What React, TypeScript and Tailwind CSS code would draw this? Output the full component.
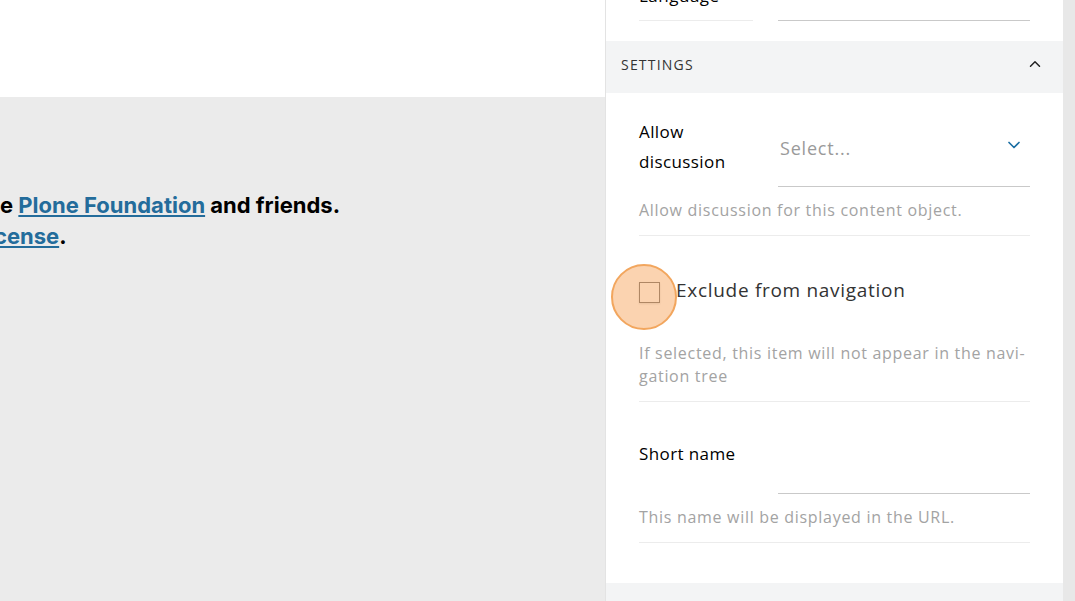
import { ChevronDown, ChevronUp } from 'lucide-react'

const sidebarFont = { fontFamily: '"Open Sans", "Noto Sans", sans-serif' }

function HelpText({ children }: { children: React.ReactNode }) {
  return <p className="text-[16px] leading-[23px] tracking-[0.7px] text-[#a3a3a3]">{children}</p>
}

export default function App() {
  return (
    <div className="flex h-[601px] w-full overflow-hidden bg-white">
      {/* main page area */}
      <div className="flex w-[605px] shrink-0 flex-col overflow-hidden">
        <div className="h-[97px] shrink-0 bg-white" />
        <div className="flex-1 bg-[#ebebeb] pt-[93px]" style={{ fontFamily: 'Inter, sans-serif' }}>
          <div className="-ml-[694px] w-[1100px] text-center text-[22px] font-bold leading-[31px] text-black">
            <p>
              The Plone® Open Source CMS/WCM is © 2000-2024 by the{' '}
              <a className="text-[#236c9b] underline underline-offset-2">Plone Foundation</a> and friends.
            </p>
            <p>
              Distributed under the <a className="text-[#236c9b] underline underline-offset-2">GNU GPL license</a>.
            </p>
          </div>
        </div>
      </div>

      {/* sidebar */}
      <div className="flex w-[458px] shrink-0 flex-col border-l border-[#e3e3e3] bg-white" style={sidebarFont}>
        {/* previous field, mostly scrolled away */}
        <div className="-mt-[19px] flex shrink-0 px-[33px]">
          <div className="w-[114px] border-b border-[#ececec] pb-[9px] text-[17px] leading-[30px] tracking-[0.5px] text-black">
            Language
          </div>
          <div className="ml-[25px] flex-1 border-b border-[#c9c9c9]" />
        </div>

        {/* settings header */}
        <div className="mt-[20px] flex h-[52px] shrink-0 items-center justify-between bg-[#f3f4f5] pb-[6px] pl-[15px] pr-[19px]">
          <span className="text-[14px] tracking-[1.2px] text-[#333]">SETTINGS</span>
          <ChevronUp size={18} strokeWidth={2} className="text-[#222]" />
        </div>

        <div className="shrink-0 px-[33px]">
          {/* allow discussion */}
          <div className="border-b border-[#ececec] pb-[13px] pt-[24px]">
            <div className="flex">
              <label className="w-[114px] text-[17px] font-medium leading-[30px] tracking-[0.4px] text-black">
                Allow
                <br />
                discussion
              </label>
              <div className="ml-[25px] flex h-[70px] flex-1 items-start justify-between border-b border-[#c9c9c9] pl-[2px] pr-[6px] pt-[18px]">
                <span className="text-[18px] leading-[26px] tracking-[0.8px] text-[#9a9a9a]">Select...</span>
                <ChevronDown size={20} strokeWidth={2} className="text-[#1a6ea3]" />
              </div>
            </div>
            <div className="mt-[12px]">
              <HelpText>Allow discussion for this content object.</HelpText>
            </div>
          </div>

          {/* exclude from navigation */}
          <div className="relative border-b border-[#ececec] pb-[13px] pt-[44px]">
            <div className="flex items-center">
              <span className="h-[21px] w-[21px] border border-[#666] bg-white shadow-[0_1px_2px_rgba(0,0,0,0.15)]" />
              <span className="relative -top-[2px] ml-[16px] text-[19px] leading-[24px] tracking-[0.7px] text-[#333]">
                Exclude from navigation
              </span>
            </div>
            <div className="absolute left-[-28px] top-[28px] h-[66px] w-[66px] rounded-full border-2 border-[#f2a65e] bg-[#f7a862]/50" />
            <div className="mt-[38px]">
              <HelpText>
                If selected, this item will not appear in the navi-
                <br />
                gation tree
              </HelpText>
            </div>
          </div>

          {/* short name */}
          <div className="border-b border-[#ececec] pb-[13px] pt-[37px]">
            <div className="flex">
              <label className="w-[114px] text-[17px] font-medium leading-[30px] tracking-[0.4px] text-black">
                Short name
              </label>
              <div className="ml-[25px] h-[55px] flex-1 border-b border-[#c9c9c9]" />
            </div>
            <div className="mt-[12px]">
              <HelpText>This name will be displayed in the URL.</HelpText>
            </div>
          </div>
        </div>

        <div className="mt-[40px] h-[60px] shrink-0 bg-[#f3f4f5]" />
      </div>

      {/* scrollbar */}
      <div className="w-[12px] shrink-0 bg-[#e8e8e8]" />
    </div>
  )
}
